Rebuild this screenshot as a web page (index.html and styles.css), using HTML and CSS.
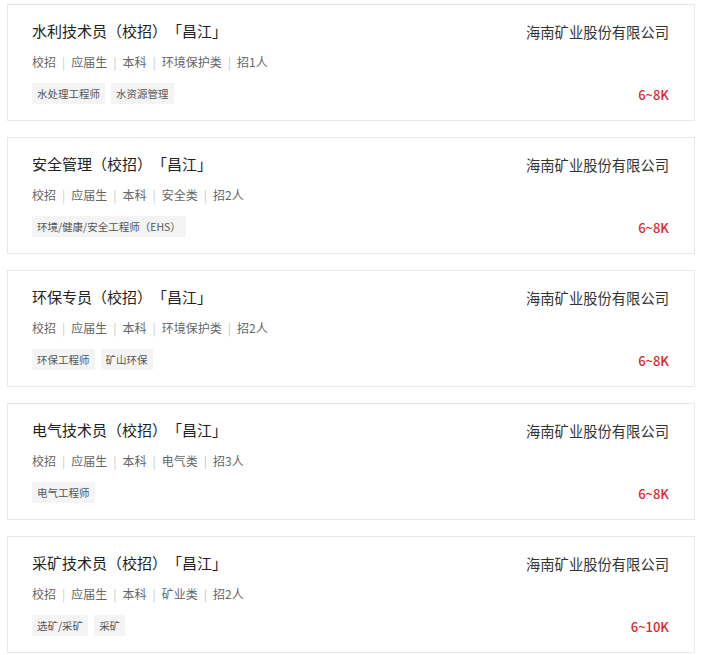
FILE: index.html
```html
<!DOCTYPE html>
<html lang="zh-CN">
<head>
<meta charset="utf-8">
<title>职位列表</title>
<link rel="stylesheet" href="styles.css">
</head>
<body>
<div class="list">
  <div class="card">
    <div class="main">
      <div class="title">水利技术员（校招）「昌江」</div>
      <div class="meta"><span>校招</span><span class="sep">|</span><span>应届生</span><span class="sep">|</span><span>本科</span><span class="sep">|</span><span>环境保护类</span><span class="sep">|</span><span>招1人</span></div>
      <div class="tags"><span class="tag">水处理工程师</span><span class="tag">水资源管理</span></div>
    </div>
    <div class="side">
      <div class="company">海南矿业股份有限公司</div>
      <div class="salary">6~8K</div>
    </div>
  </div>
  <div class="card">
    <div class="main">
      <div class="title">安全管理（校招）「昌江」</div>
      <div class="meta"><span>校招</span><span class="sep">|</span><span>应届生</span><span class="sep">|</span><span>本科</span><span class="sep">|</span><span>安全类</span><span class="sep">|</span><span>招2人</span></div>
      <div class="tags"><span class="tag">环境/健康/安全工程师（EHS）</span></div>
    </div>
    <div class="side">
      <div class="company">海南矿业股份有限公司</div>
      <div class="salary">6~8K</div>
    </div>
  </div>
  <div class="card">
    <div class="main">
      <div class="title">环保专员（校招）「昌江」</div>
      <div class="meta"><span>校招</span><span class="sep">|</span><span>应届生</span><span class="sep">|</span><span>本科</span><span class="sep">|</span><span>环境保护类</span><span class="sep">|</span><span>招2人</span></div>
      <div class="tags"><span class="tag">环保工程师</span><span class="tag">矿山环保</span></div>
    </div>
    <div class="side">
      <div class="company">海南矿业股份有限公司</div>
      <div class="salary">6~8K</div>
    </div>
  </div>
  <div class="card">
    <div class="main">
      <div class="title">电气技术员（校招）「昌江」</div>
      <div class="meta"><span>校招</span><span class="sep">|</span><span>应届生</span><span class="sep">|</span><span>本科</span><span class="sep">|</span><span>电气类</span><span class="sep">|</span><span>招3人</span></div>
      <div class="tags"><span class="tag">电气工程师</span></div>
    </div>
    <div class="side">
      <div class="company">海南矿业股份有限公司</div>
      <div class="salary">6~8K</div>
    </div>
  </div>
  <div class="card">
    <div class="main">
      <div class="title">采矿技术员（校招）「昌江」</div>
      <div class="meta"><span>校招</span><span class="sep">|</span><span>应届生</span><span class="sep">|</span><span>本科</span><span class="sep">|</span><span>矿业类</span><span class="sep">|</span><span>招2人</span></div>
      <div class="tags"><span class="tag">选矿/采矿</span><span class="tag">采矿</span></div>
    </div>
    <div class="side">
      <div class="company">海南矿业股份有限公司</div>
      <div class="salary">6~10K</div>
    </div>
  </div>
</div>
</body>
</html>
```
FILE: styles.css
```css
* { box-sizing: border-box; }
html, body { margin: 0; padding: 0; background: #fff; }
body {
  font-family: "Noto Sans CJK SC", "Noto Sans", sans-serif;
  color: #333;
  text-spacing-trim: space-all;
}
.list {
  padding: 4px 9px 0 7px;
}
.card {
  display: flex;
  justify-content: space-between;
  border: 1px solid #e8e8e8;
  background: #fff;
  padding: 0 25px 0 24px;
  margin-bottom: 16px;
}
.main {
  display: flex;
  flex-direction: column;
  align-items: flex-start;
  padding: 15px 0 16px;
}
.title {
  font-size: 15px;
  line-height: 22px;
  color: #222;
}
.meta {
  margin-top: 11px;
  font-size: 12px;
  line-height: 18px;
  color: #666;
  display: flex;
}
.sep {
  color: #c8c8c8;
  margin: 0 6px;
}
.tags {
  margin-top: 12px;
  display: flex;
  gap: 6px;
}
.tag {
  font-size: 10.5px;
  line-height: 21px;
  height: 21px;
  padding: 0 5px;
  background: #f4f4f4;
  color: #555;
}
.side {
  display: flex;
  flex-direction: column;
  align-items: flex-end;
  justify-content: space-between;
  padding: 16px 0 15px;
}
.company {
  font-size: 14.3px;
  line-height: 22px;
  color: #333;
}
.salary {
  font-size: 13px;
  line-height: 20px;
  font-weight: 500;
  color: #d9262c;
}
```
